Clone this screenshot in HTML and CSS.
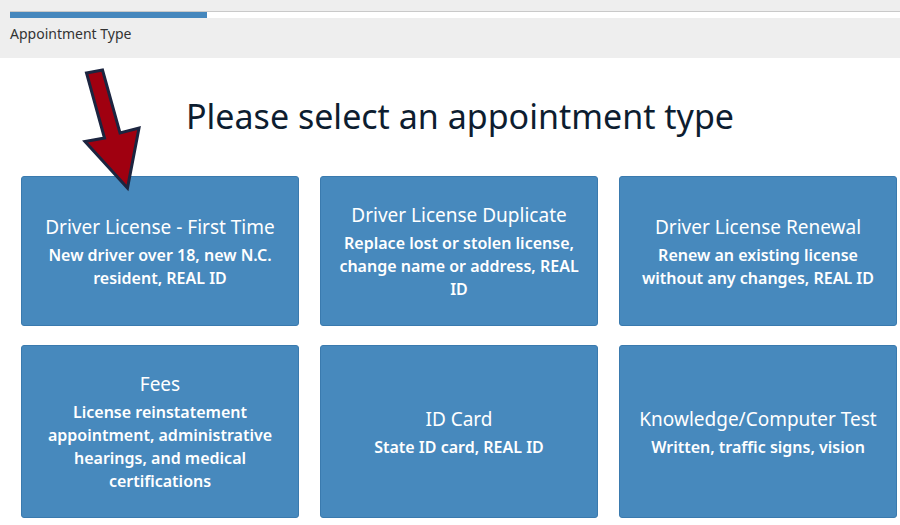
FILE: index.html
```html
<!DOCTYPE html>
<html>
<head>
<meta charset="utf-8">
<link rel="stylesheet" href="styles.css">
</head>
<body>
<header class="topbar">
  <div class="progress"><div class="progress-fill"></div></div>
  <div class="step">Appointment Type</div>
</header>
<main class="content">
  <h1 class="title">Please select an appointment type</h1>
  <div class="grid">
    <div class="card">
      <div class="card-title">Driver License - First Time</div>
      <div class="card-desc">New driver over 18, new N.C. resident, REAL ID</div>
    </div>
    <div class="card">
      <div class="card-title">Driver License Duplicate</div>
      <div class="card-desc">Replace lost or stolen license, change name or address, REAL ID</div>
    </div>
    <div class="card">
      <div class="card-title">Driver License Renewal</div>
      <div class="card-desc">Renew an existing license without any changes, REAL ID</div>
    </div>
    <div class="card">
      <div class="card-title">Fees</div>
      <div class="card-desc">License reinstatement appointment, administrative hearings, and medical certifications</div>
    </div>
    <div class="card">
      <div class="card-title">ID Card</div>
      <div class="card-desc">State ID card, REAL ID</div>
    </div>
    <div class="card">
      <div class="card-title">Knowledge/Computer Test</div>
      <div class="card-desc">Written, traffic signs, vision</div>
    </div>
  </div>
  <svg class="arrow" width="900" height="220" viewBox="0 0 900 220">
    <polygon points="86.5,73 102.5,70 120,133 139,128 127.5,188 85,141.5 104.5,138" fill="#a00010" stroke="#1c2540" stroke-width="3" stroke-linejoin="miter"/>
  </svg>
</main>
</body>
</html>
```
FILE: styles.css
```css
html, body {
  margin: 0;
  padding: 0;
  background: #ffffff;
  font-family: "Noto Sans", "Open Sans", sans-serif;
}
.topbar {
  background: #eeeeee;
  height: 58px;
  box-sizing: border-box;
  padding: 11px 0 0 10px;
}
.progress {
  height: 6px;
  background: #ffffff;
  border-top: 1px solid #c9c9c9;
}
.progress-fill {
  width: 197px;
  height: 100%;
  background: #4587bd;
}
.step {
  margin-top: 6px;
  font-size: 14px;
  color: #333333;
  line-height: 20px;
}
.content {
  position: relative;
}
.title {
  margin: 0;
  padding-top: 36px;
  height: 83px;
  box-sizing: border-box;
  text-align: center;
  font-weight: 400;
  font-size: 34px;
  line-height: 44px;
  color: #0d1d30;
  padding-left: 20px;
}
.grid {
  display: grid;
  grid-template-columns: 278px 278px 278px;
  column-gap: 21px;
  row-gap: 19px;
  padding-left: 21px;
  margin-top: 35px;
}
.card {
  background: #4789bd;
  border: 1px solid #3a7aae;
  border-radius: 3px;
  color: #ffffff;
  text-align: center;
  display: flex;
  flex-direction: column;
  justify-content: center;
  padding: 24px 14px;
  min-height: 149px;
  box-sizing: border-box;
}
.card-title {
  font-size: 19px;
  line-height: 28px;
  margin-bottom: 3px;
}
.card-desc {
  font-size: 16px;
  font-weight: 600;
  line-height: 23px;
}
.arrow {
  position: absolute;
  left: 0;
  top: -58px;
  pointer-events: none;
}
```
